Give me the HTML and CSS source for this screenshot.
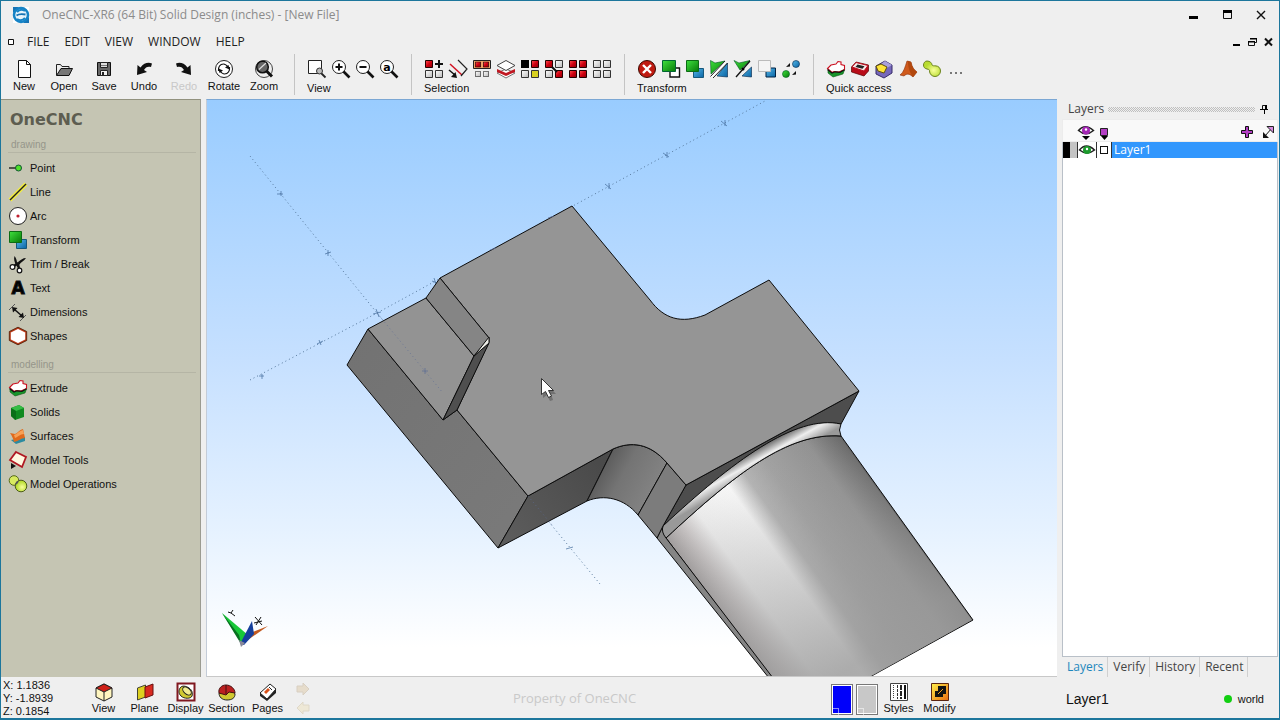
FILE: index.html
```html
<!DOCTYPE html>
<html lang="en">
<head>
<meta charset="utf-8">
<title>OneCNC-XR6</title>
<link rel="stylesheet" href="styles.css">
</head>
<body>
<svg class="defs" aria-hidden="true">
  <defs>
    <linearGradient id="gGreen" x1="0" y1="0" x2="1" y2="1"><stop offset="0" stop-color="#3fe03f"/><stop offset="1" stop-color="#067a06"/></linearGradient>
    <linearGradient id="gBlue" x1="0" y1="0" x2="1" y2="1"><stop offset="0" stop-color="#56b8e8"/><stop offset="1" stop-color="#0a64a4"/></linearGradient>
    <linearGradient id="gRed" x1="0" y1="0" x2="1" y2="1"><stop offset="0" stop-color="#ff5050"/><stop offset=".5" stop-color="#d00010"/><stop offset="1" stop-color="#8a0008"/></linearGradient>
    <linearGradient id="gWhite" x1="0" y1="0" x2="1" y2="1"><stop offset="0" stop-color="#fff"/><stop offset="1" stop-color="#bbb"/></linearGradient>
    <linearGradient id="gGold" x1="0" y1="0" x2="1" y2="1"><stop offset="0" stop-color="#fff04a"/><stop offset="1" stop-color="#e86a10"/></linearGradient>
    <radialGradient id="gLime" cx=".6" cy=".6"><stop offset="0" stop-color="#f8ff9a"/><stop offset="1" stop-color="#b8dc30"/></radialGradient>
    <symbol id="sqR" viewBox="0 0 8 8"><path d="M.5.5h7v7h-7z" fill="url(#gRed)" stroke="#200"/></symbol>
    <symbol id="sqW" viewBox="0 0 8 8"><path d="M.5.5h7v7h-7z" fill="url(#gWhite)" stroke="#333"/></symbol>
    <symbol id="extrude" viewBox="0 0 20 20">
      <path d="M2 11v3l5 4 10-3 1.500-4z" fill="#17952a" stroke="#0a5a14" stroke-width=".6"/>
      <path d="M1.500 9.500 5 6l5-1L12 2.500l3 .5v2.500l3.500 1v4L13 13l-5-.5-2 1z" fill="#fff" stroke="#cc1020" stroke-width="1.100"/>
      <path d="M1.500 10.500 6 14l3-1.200 5 .5 4.500-2.500" fill="none" stroke="#111" stroke-width="1.200"/>
    </symbol>
    <symbol id="transform" viewBox="0 0 20 20"><path d="M8.500 9.500h10v9h-10z" fill="url(#gBlue)" stroke="#17587c"/><path d="M1.500 1.500h12v11h-12z" fill="url(#gGreen)" stroke="#0c6b14"/></symbol>
    <symbol id="ops" viewBox="0 0 20 20"><circle cx="6" cy="6.500" r="4.800" fill="#d8ea60" stroke="#55691b"/><circle cx="13" cy="12" r="5.800" fill="url(#gLime)" stroke="#4d5e17"/><path d="M7.200 11.200Q7.500 7 10.800 6.600 10.500 10 7.200 11.200z" fill="#555"/></symbol>
    <linearGradient id="cyl" gradientUnits="userSpaceOnUse" x1="666" y1="538" x2="830" y2="420">
      <stop offset="0" stop-color="#a09c9c"/><stop offset=".1" stop-color="#c6c2c2"/><stop offset=".2" stop-color="#ececec"/><stop offset=".4" stop-color="#f6f6f6"/><stop offset=".5" stop-color="#b4b4b4"/><stop offset=".62" stop-color="#a2a2a2"/><stop offset=".84" stop-color="#929292"/><stop offset="1" stop-color="#646464"/>
    </linearGradient>
    <linearGradient id="cylFade" gradientUnits="userSpaceOnUse" x1="740" y1="480" x2="866" y2="656"><stop offset="0" stop-color="#9a9a9a" stop-opacity="0"/><stop offset="1" stop-color="#9a9a9a" stop-opacity=".8"/></linearGradient>
    <linearGradient id="fillet" gradientUnits="userSpaceOnUse" x1="735" y1="462" x2="745" y2="480"><stop offset="0" stop-color="#777"/><stop offset=".45" stop-color="#eee"/><stop offset="1" stop-color="#999"/></linearGradient>
    <linearGradient id="front" gradientUnits="userSpaceOnUse" x1="510" y1="540" x2="600" y2="465"><stop offset="0" stop-color="#5c5c5c"/><stop offset="1" stop-color="#4a4a4a"/></linearGradient>
    <linearGradient id="bend" gradientUnits="userSpaceOnUse" x1="598" y1="475" x2="652" y2="505"><stop offset="0" stop-color="#5c5c5c"/><stop offset=".35" stop-color="#747474"/><stop offset="1" stop-color="#858585"/></linearGradient>
    <linearGradient id="side" x1="0" y1="0" x2="1" y2="1"><stop offset="0" stop-color="#727272"/><stop offset="1" stop-color="#7a7a7a"/></linearGradient>
  </defs>
</svg>

<div class="app">
  <header class="titlebar">
    <svg class="logo" viewBox="0 0 18 18"><path d="M1 1h16v16H1z" fill="#fff"/><path d="M1 1h6L1 7zM17 17h-6l6-6z" fill="#1773b4"/><circle cx="9" cy="9" r="7" fill="#e8f4fb" stroke="#1583c6" stroke-width="2.500"/><path d="M13 5a6 6 0 0 0-8 1M5 13a6 6 0 0 0 8-1" stroke="#1583c6" stroke-width="2" fill="none"/><path d="M4.500 9.500c2-1.500 6-1.500 9-1" stroke="#1773b4" stroke-width="1.800" fill="none"/></svg>
    <span class="title">OneCNC-XR6 (64 Bit) Solid Design (inches) - [New File]</span>
    <div class="winbtns">
      <button aria-label="Minimize"><svg viewBox="0 0 12 12"><path d="M2 7h9v3H2z"/></svg></button>
      <button aria-label="Maximize"><svg viewBox="0 0 12 12"><path d="M2.500 1.500h8v8h-8z" fill="none" stroke="#111"/><path d="M2 1h9v3H2z"/></svg></button>
      <button aria-label="Close"><svg viewBox="0 0 12 12"><path d="M2 2l8 8M10 2l-8 8" stroke="#111" stroke-width="1.400"/></svg></button>
    </div>
  </header>

  <nav class="menubar">
    <button class="sys" aria-label="Document menu"><svg viewBox="0 0 8 8"><path d="M1.500 1.500h5v5h-5z" fill="#fff" stroke="#111"/></svg></button>
    <button>FILE</button><button>EDIT</button><button>VIEW</button><button>WINDOW</button><button>HELP</button>
    <div class="docbtns">
      <button aria-label="Minimize document"><svg viewBox="0 0 10 10"><path d="M2 7h7v2H2z"/></svg></button>
      <button aria-label="Restore document"><svg viewBox="0 0 10 10"><path d="M3.500 1.500h6v4h-2M1.500 4.500h6v4h-6z" fill="none" stroke="#111"/><path d="M3 1h7v1.500H3zM1 4h7v1.500H1z"/></svg></button>
      <button aria-label="Close document"><svg viewBox="0 0 10 10"><path d="M2 1.500l7 7M9 1.500l-7 7" stroke="#111" stroke-width="2"/></svg></button>
    </div>
  </nav>

  <div class="toolbar">
    <div class="filebtns">
      <button><svg viewBox="0 0 20 20"><path d="M4.500 1.500h8l4 4v13h-12z" fill="#fff" stroke="#111"/><path d="M12.500 1.500v4h4" fill="none" stroke="#111"/></svg>New</button>
      <button><svg viewBox="0 0 20 20"><path d="M2.500 16V5.500h4l1.500 2h7V10" fill="#eee" stroke="#222"/><path d="M2.500 16.500 7 9.500h11.500l-3.500 7z" fill="#777" stroke="#111"/></svg>Open</button>
      <button><svg viewBox="0 0 20 20"><path d="M3.500 3.500h13v13h-13z" fill="#666" stroke="#111"/><path d="M6.500 3.500h7v5h-7z" fill="#ddd" stroke="#222"/><path d="M6.500 11.500h7v5h-7z" fill="#eee" stroke="#222"/><path d="M8 13h2v3H8z" fill="#222"/><path d="M7 6.500h6" stroke="#777"/></svg>Save</button>
      <button><svg viewBox="0 0 20 20"><path d="M3 16 3.500 6l3 2.500C10 4 14 3 18 4.500L17 8c-3-1-5.500 0-7 3l3 2z" fill="#111"/></svg>Undo</button>
      <button disabled><svg viewBox="0 0 20 20"><path d="M17 16 16.500 6l-3 2.500C10 4 6 3 2 4.500L3 8c3-1 5.500 0 7 3l-3 2z" fill="#111"/></svg>Redo</button>
      <button><svg viewBox="0 0 20 20"><circle cx="10" cy="10" r="8.500" fill="#fff" stroke="#222"/><path d="M4.500 12C4 8 6 5 9.500 5c1.500 0 3 1 5 3.500M15.500 8c.5 4-1.500 7-5 7-1.500 0-3-1-5-3.500" fill="none" stroke="#111" stroke-width="1.200"/><path d="M15.500 10.500l-4.500-2 3.500-2.500zM4.500 9.500l4.500 2L5.500 14z" fill="#111"/></svg>Rotate</button>
      <button><svg viewBox="0 0 20 20"><circle cx="10" cy="10" r="8.500" fill="none" stroke="#444"/><circle cx="8.500" cy="8" r="5.800" fill="#666" stroke="#111" stroke-width="1.500"/><path d="M5 10.500 12 4" stroke="#ddd" stroke-width="1.200"/><path d="m12.500 12 5.500 5.500" stroke="#111" stroke-width="3"/></svg>Zoom</button>
    </div>
    <section class="group">
      <div class="icons">
        <button aria-label="Zoom window"><svg viewBox="0 0 20 20"><path d="M1.500 1.500h13v13h-13z" fill="#fff" stroke="#222"/><circle cx="12.500" cy="12" r="3" fill="#bbb" stroke="#333"/><path d="m14.500 14.500 4 4" stroke="#222" stroke-width="1.800"/></svg></button>
        <button aria-label="Zoom in"><svg viewBox="0 0 20 20"><circle cx="8" cy="8" r="6.500" fill="#fff" stroke="#222"/><path d="M4.500 8h7M8 4.500v7" stroke="#111" stroke-width="2"/><path d="m12.500 12.500 6 6" stroke="#111" stroke-width="2.600"/></svg></button>
        <button aria-label="Zoom out"><svg viewBox="0 0 20 20"><circle cx="8" cy="8" r="6.500" fill="#fff" stroke="#222"/><path d="M4.500 8h7" stroke="#111" stroke-width="2"/><path d="m12.500 12.500 6 6" stroke="#111" stroke-width="2.600"/></svg></button>
        <button aria-label="Zoom all"><svg viewBox="0 0 20 20"><circle cx="8" cy="8" r="6.500" fill="#fff" stroke="#222"/><text x="8" y="12" class="glyph-a">a</text><path d="m12.500 12.500 6 6" stroke="#111" stroke-width="2.600"/></svg></button>
      </div><span>View</span>
    </section>
    <section class="group">
      <div class="icons">
        <button aria-label="Select add"><svg viewBox="0 0 20 20"><use href="#sqR" x="1" y="1" width="8" height="8"/><path d="M15 1v8M11 5h8" stroke="#111" stroke-width="2"/><use href="#sqW" x="1" y="11" width="8" height="8"/><use href="#sqW" x="11" y="11" width="8" height="8"/></svg></button>
        <button aria-label="Select chain"><svg viewBox="0 0 20 20"><path d="m2 5 12 11" stroke="#d01020" stroke-width="1.500"/><path d="m10 1 9 9-6 7" fill="none" stroke="#222" stroke-width="1.200"/><path d="m1 11 6 5" stroke="#111" stroke-width="1.500"/><path d="m9 19-6-1 4.500-5z" fill="#111"/></svg></button>
        <button aria-label="Select group"><svg viewBox="0 0 20 20"><path d="M1.500 1.500h17v8h-17z" fill="#f0a468" stroke="#222"/><use href="#sqR" x="3" y="2.500" width="6" height="6"/><use href="#sqR" x="11" y="2.500" width="6" height="6"/><use href="#sqW" x="3" y="12" width="6" height="6"/><use href="#sqW" x="11" y="12" width="6" height="6"/></svg></button>
        <button aria-label="Select layer"><svg viewBox="0 0 20 20"><path d="m1 14 9 5 9-5-9-4z" fill="#fff" stroke="#777"/><path d="m1 10 9 4 9-4v3l-9 4-9-4z" fill="#c01822"/><path d="m1 6.500 9-5 9 5-9 5z" fill="#fff" stroke="#444"/></svg></button>
        <button aria-label="Select colour"><svg viewBox="0 0 20 20"><path d="M1 1h8v8H1z"/><use href="#sqR" x="11" y="1" width="8" height="8"/><use href="#sqW" x="1" y="11" width="8" height="8"/><path d="M11.500 11.500h7v7h-7z" fill="#d8d020" stroke="#333"/></svg></button>
        <button aria-label="Invert selection"><svg viewBox="0 0 20 20"><use href="#sqR" x="1" y="1" width="8" height="8"/><use href="#sqW" x="11" y="1" width="8" height="8"/><use href="#sqW" x="1" y="11" width="8" height="8"/><use href="#sqR" x="11" y="11" width="8" height="8"/><path d="m8 8 5 5" stroke="#111" stroke-width="2"/></svg></button>
        <button aria-label="Select all"><svg viewBox="0 0 20 20"><use href="#sqR" x="1" y="1" width="8" height="8"/><use href="#sqR" x="11" y="1" width="8" height="8"/><use href="#sqR" x="1" y="11" width="8" height="8"/><use href="#sqR" x="11" y="11" width="8" height="8"/></svg></button>
        <button aria-label="Select none"><svg viewBox="0 0 20 20"><use href="#sqW" x="1" y="1" width="8" height="8"/><use href="#sqW" x="11" y="1" width="8" height="8"/><use href="#sqW" x="1" y="11" width="8" height="8"/><use href="#sqW" x="11" y="11" width="8" height="8"/></svg></button>
      </div><span>Selection</span>
    </section>
    <section class="group">
      <div class="icons">
        <button aria-label="Delete"><svg viewBox="0 0 20 20"><circle cx="10" cy="10" r="8.500" fill="#c01a10" stroke="#3a0800"/><path d="m6 6 8 8M14 6l-8 8" stroke="#fff" stroke-width="2.400"/></svg></button>
        <button aria-label="Copy"><svg viewBox="0 0 20 20"><path d="M9 9h9.500v9H9z" fill="#fff" stroke="#111" stroke-width="1.400"/><path d="M1.500 1.500h13v11h-13z" fill="url(#gGreen)" stroke="#063"/></svg></button>
        <button aria-label="Move"><svg viewBox="0 0 20 20"><use href="#transform"/></svg></button>
        <button aria-label="Offset"><svg viewBox="0 0 20 20"><path d="M1.500 1.500 6 4l10-2L2 15z" fill="url(#gGreen)" stroke="#052" stroke-width=".6"/><path d="M18.500 4v14L8 17z" fill="url(#gBlue)" stroke="#024" stroke-width=".6"/><path d="M2.500 18 16 3.500" stroke="#fff" stroke-width="2.500"/><path d="M1.500 17.500 16 2M4 19 18.500 4" stroke="#222"/></svg></button>
        <button aria-label="Mirror"><svg viewBox="0 0 20 20"><path d="M1 1.500 6 4l11-2.500L7 11z" fill="url(#gGreen)" stroke="#052" stroke-width=".6"/><path d="M18.500 8v10L9 17z" fill="url(#gBlue)" stroke="#024" stroke-width=".6"/><path d="M3 18 17 2" stroke="#111" stroke-width="1.300"/><circle cx="10" cy="10" r="1.500"/></svg></button>
        <button aria-label="Scale"><svg viewBox="0 0 20 20"><path d="M9 9h9.500v9H9z" fill="url(#gBlue)" stroke="#024"/><path d="M1.500 1.500h12v11h-12z" fill="#f4f4f4" stroke="#bbb"/></svg></button>
        <button aria-label="Rotate copy"><svg viewBox="0 0 20 20"><circle cx="15" cy="5" r="3.500" fill="url(#gBlue)" stroke="#024" stroke-width=".6"/><circle cx="5" cy="15" r="3.500" fill="url(#gGreen)" stroke="#052" stroke-width=".6"/><path d="m5 8 4-4v3.500zM11 16l4-4v3.500z" fill="#111"/></svg></button>
      </div><span>Transform</span>
    </section>
    <section class="group">
      <div class="icons">
        <button aria-label="Extrude"><svg viewBox="0 0 20 20"><use href="#extrude"/></svg></button>
        <button aria-label="Pocket"><svg viewBox="0 0 20 20"><path d="M1.500 8 6 3l12.500 3v6L14 17 1.500 13z" fill="#b80c18" stroke="#500" stroke-width=".7"/><path d="M2 8 6 3.500l12 3-4 5.500z" fill="#f8e8e8" stroke="#c01020"/><path d="m5.500 8 2-2.500 7 1.700-2 2.600z" fill="#222"/></svg></button>
        <button aria-label="Chamfer"><svg viewBox="0 0 20 20"><path d="m2 7 9-5 7 4v8l-8 5-8-4z" fill="#7668ba" stroke="#372b68"/><path d="m7 5 4-3 7 4-5 3z" fill="#a9a0dc"/><path d="m2 7 5-2 6 3-3 6-6-2z" fill="#ffe53a" stroke="#61520a"/></svg></button>
        <button aria-label="Loft"><svg viewBox="0 0 20 20"><path d="M2 16c4-3 5-8 7-14l4 1c1 5 3 8 6 10l-4 5c-3-3-6-4-9-1z" fill="#cf5a1c" stroke="#8a2f0a" stroke-width=".6"/><path d="M10 2l3 1c1 5 3 8 6 10l-4 5c-3-4-5-9-5-16z" fill="#b2480f"/></svg></button>
        <button aria-label="Combine"><svg viewBox="0 0 20 20"><path d="M5 2C8 2 10 4 10 6c1 1 2 .8 3 .8 3.500 0 5.500 2.200 5.500 5.200S16 17.500 13 17.500 7.500 15 7.500 12c0-1 0-1.500-2.500-2C2.500 9.500 1.500 8 1.500 6S3 2 5 2z" fill="url(#gLime)" stroke="#6d8420"/></svg></button>
        <button aria-label="More"><svg viewBox="0 0 20 20"><path d="M4 13h2v2H4zM9 13h2v2H9zM14 13h2v2h-2z" fill="#777"/></svg></button>
      </div><span>Quick access</span>
    </section>
  </div>

  <main class="body">
    <aside class="sidebar">
      <h1>OneCNC</h1>
      <h2>drawing</h2>
      <ul>
        <li><button><svg viewBox="0 0 20 20"><path d="M1 10h7" stroke="#111" stroke-width="1.300"/><circle cx="10.500" cy="10" r="3" fill="#4fe22a" stroke="#153"/></svg>Point</button></li>
        <li><button><svg viewBox="0 0 20 20"><path d="M2 18 18 2" stroke="#f4ef3a" stroke-width="4"/><path d="M2 18 18 2" stroke="#222" stroke-width="1.500"/></svg>Line</button></li>
        <li><button><svg viewBox="0 0 20 20"><circle cx="10" cy="10" r="8.500" fill="#fff" stroke="#222"/><circle cx="10" cy="10" r="1.600" fill="#c02030"/></svg>Arc</button></li>
        <li><button><svg viewBox="0 0 20 20"><use href="#transform"/></svg>Transform</button></li>
        <li><button><svg viewBox="0 0 20 20"><path d="M6.500 2C5.500 5 6.500 8 8 11l2 3 1-3c2-3 5-4 7-7-3 0-6 2-9 5C9 6 8 4 6.500 2z" fill="#111"/><path d="m6 12 4-3M11 14l-1-4" stroke="#111" stroke-width="2.200"/><circle cx="4.500" cy="13" r="2.400" fill="#fff" stroke="#111" stroke-width="1.200"/><circle cx="11.500" cy="16.500" r="2.300" fill="#fff" stroke="#111" stroke-width="1.200"/></svg>Trim / Break</button></li>
        <li><button><svg viewBox="0 0 20 20"><text x="10" y="16" class="glyph-text">A</text></svg>Text</button></li>
        <li><button><svg viewBox="0 0 20 20"><path d="m1 8 6-6M12 19l6-6" stroke="#555"/><path d="m6 7 8 7" stroke="#111" stroke-width="1.500"/><path d="m4 5 5.500 1L5 10.500zM16 16l-5.500-1 4.500-4.500z" fill="#111"/></svg>Dimensions</button></li>
        <li><button><svg viewBox="0 0 20 20"><path d="m10 2 8 4v8l-8 4-8-4V6z" fill="#fff" stroke="#b83a18" stroke-width="1.600"/><path d="m10 1.200 8.700 4.300v9L10 18.800l-8.700-4.300v-9z" fill="none" stroke="#4b1e08" stroke-width=".8"/></svg>Shapes</button></li>
      </ul>
      <h2>modelling</h2>
      <ul>
        <li><button><svg viewBox="0 0 20 20"><use href="#extrude"/></svg>Extrude</button></li>
        <li><button><svg viewBox="0 0 20 20"><path d="m3 6 8-3 5 3v9l-9 3-4-4z" fill="#0f8a20"/><path d="m3 6 8-3 5 3-8 3z" fill="#35bd45"/><path d="M8 9v9l-5-4V6z" fill="#0a6f18"/></svg>Solids</button></li>
        <li><button><svg viewBox="0 0 20 20"><path d="m3 14 5 4 9-3v-4z" fill="#2d8ba0"/><path d="m2 7 5 1c3-1 4-4 8-5l2 9c-4 0-6 3-11 4-1-4-2-6-4-9z" fill="#e06a1c"/><path d="M6 9c3-1 5-4 9-5l1 4c-4 0-6 3-9 4z" fill="#f7a156"/></svg>Surfaces</button></li>
        <li><button><svg viewBox="0 0 20 20"><path d="m8 2 10 5-4 10L2 10z" fill="#fff8e0" stroke="#b01822" stroke-width="1.800"/><path d="m3 13 5 3-5 3z" fill="#111"/></svg>Model Tools</button></li>
        <li><button><svg viewBox="0 0 20 20"><use href="#ops"/></svg>Model Operations</button></li>
      </ul>
    </aside>

    <section class="viewport" aria-label="Model view">
      <svg viewBox="207 100 850 577" preserveAspectRatio="xMinYMin slice">
        <g class="axis">
          <path d="M250 380 377 313 765 101M250 156 377 313 600 584"/>
        </g>
        <path class="tick" d="M259 376h5M262 374v5M317 344l6-3M319 340l2 5M432 281l5 2M434 278l2 6M605 184l6 5M609 183v6M663 153l6 4M667 152v6M721 121l6 5M725 120v6M277 194h6M281 191v5M325 254l6-2M328 250v6M373 314l8-2M376 309l3 8M566 549l7-2"/>
        <g class="edges">
          <path fill="#4d4d4d" d="M686 485 859 391 841 424C800 417 740 456 663 526z"/>
          <path fill="url(#cyl)" d="M666 538C735 474 788 432 841 436L973 620 868 678H772z"/>
          <path class="plain" fill="url(#cylFade)" d="M667 538C735 475 788 433 840 437L972 620 868 678H773z"/>
          <path fill="#858585" d="M657 538 663 526 666 538 773 678H769z"/>
          <path fill="url(#fillet)" d="M663 526C732 462 795 414 841 424Q838 430 841 436C788 432 735 474 666 538Q661 532 663 526z"/>
          <path fill="url(#side)" d="M368 329 347 365 498 548 528 496 457 410 443 420z"/>
          <path fill="url(#front)" d="M528 496 613 449 587 501 498 548z"/>
          <path fill="url(#bend)" d="M613 449C631 441 650 443 667 463L638 515C624 498 604 494 587 501z"/>
          <path fill="#7c7c7c" d="M667 463 686 485 663 526 657 538 638 515z"/>
          <path fill="#959595" d="M572 206 650 300C664 319 681 324 705 315L769 280 859 391 686 485 667 463C650 443 631 441 613 449L528 496 457 410 489 342V338L440 278z"/>
          <path fill="#939393" d="M368 329 426 298 474 356 443 420z"/>
          <path fill="#858585" d="M426 298 440 278 489 338 474 356z"/>
          <path fill="#4f4f4f" d="M474 356 489 343 457 410 443 420z"/>
          <path fill="#ecece6" d="M489 337v6l-15 13z"/>
        </g>
        <path class="axis inner" d="M377 313 443 393M528 496 552 525"/>
        <path class="tick inner" d="M422 371h6M425 368v6M490 250l6-2M548 218l6-2"/>
        <g>
          <path d="m222 613 20 31 6-9z" fill="#18c838"/><path d="m222 613 19 31-2-9z" fill="#087020"/>
          <path d="m242 644 26-18-18 7z" fill="#c25a20"/>
          <path d="m240 644 12-23 2 13-10 11z" fill="#153f9c"/>
          <path d="M239 640l6 3-4 4z" fill="#889"/>
          <path d="m228 612 3 1 2-3M231 613l4 3M255 617l7 8M254 623l8-2M261 617l-5 8" stroke="#111" fill="none"/>
        </g>
        <path d="M543 380v18l4-3 3 6 3-1-2-6h5z" fill="#444" opacity=".45"/>
        <path d="M541.500 378.500v16l4-3 3 6 3-1.500-3-5.500h5z" fill="#fff" stroke="#333"/>
      </svg>
    </section>

    <aside class="panel">
      <div class="panel-head"><span>Layers</span><i class="grip"></i>
        <button aria-label="Pin"><svg viewBox="0 0 10 10"><path d="M3.500 1.500h4v4h-4z" fill="none" stroke="#111"/><path d="M6 1h2v5H6zM1 5h8v1H1zM5 6h1v4H5z"/></svg></button>
      </div>
      <div class="panel-tools">
        <button class="eye" aria-label="Show all"><svg viewBox="0 0 18 18"><path d="M1.500 7.500Q8 0 16.500 7.500 9 14 1.500 7.500z" fill="#fff" stroke="#222" stroke-width="1.500"/><circle cx="9" cy="7.500" r="4" fill="#a326b4"/><circle cx="9" cy="6.500" r="1.200" fill="#fff"/><path d="M5 13h8l-4 4z"/></svg></button>
        <button class="mark" aria-label="Mark all"><svg viewBox="0 0 18 18"><path d="M5.500 5.500h7v7h-7z" fill="#b33fc4" stroke="#222"/><path d="M6 13h7l-3.500 4z"/></svg></button>
        <button class="add" aria-label="Add layer"><svg viewBox="0 0 18 18"><path d="M7.500 3.500v4h-4v3h4v4h3v-4h4v-3h-4v-4z" fill="#b33fc4" stroke="#111"/></svg></button>
        <button aria-label="Expand"><svg viewBox="0 0 18 18"><path d="m6 13 7-8" stroke="#111"/><path d="M8 3.500h6.500V10z" fill="#d58ade" stroke="#222"/><path d="M4 9v6h6z" fill="#111"/></svg></button>
      </div>
      <div class="layers">
        <div class="layer">
          <i class="sw black"></i><i class="sw grey"></i>
          <button class="eye" aria-label="Visible"><svg viewBox="0 0 18 16"><path d="M1.500 8Q8 0 16.500 8 9 14 1.500 8z" fill="#fff" stroke="#222" stroke-width="1.500"/><circle cx="9" cy="8" r="4" fill="#1c9a2c"/><circle cx="9" cy="7" r="1.200" fill="#fff"/></svg></button>
          <label class="pick"><input type="checkbox" aria-label="Mark Layer1"></label>
          <button class="name">Layer1</button>
        </div>
      </div>
      <div class="tabs" role="tablist"><button role="tab" class="on" aria-selected="true">Layers</button><button role="tab">Verify</button><button role="tab">History</button><button role="tab">Recent</button></div>
    </aside>
  </main>

  <footer class="status">
    <div class="coords"><span>X: 1.1836</span><span>Y: -1.8939</span><span>Z: 0.1854</span></div>
    <div class="sbtns">
      <button><svg viewBox="0 0 20 20"><path d="m2 6 8-4 8 4v9l-8 4-8-4z" fill="#fff6c0" stroke="#222"/><path d="m2 6 8-4 8 4-8 4z" fill="#cf2018" stroke="#222"/><path d="M10 10v9" stroke="#222"/></svg>View</button>
      <button><svg viewBox="0 0 20 20"><path d="m2.500 6 8-3v12l-8 3z" fill="#ddd020" stroke="#443"/><path d="m10 5 8-3v11l-8 3z" fill="#d82a20" stroke="#611"/></svg>Plane</button>
      <button><svg viewBox="0 0 20 20"><path d="M1.500 1.500h17v17h-17z" fill="#fff" stroke="#801820" stroke-width="2"/><path d="M4 6c2-3 6-2 9 0s4 5 3 8-8 3-11 0-2-6-1-8z" fill="#d0c830" stroke="#222"/><ellipse cx="11" cy="9" rx="5" ry="3" transform="rotate(40 11 9)" fill="#f2ec90" stroke="#222"/></svg>Display</button>
      <button><svg viewBox="0 0 20 20"><path d="M2 11c0 4 3 7 8 7s8-2 8-6l-3-6z" fill="#d0c830" stroke="#222"/><path d="M2 11c-1-5 3-8 7-8 5 0 9 4 9 8l-6-1-3 3z" fill="#bb2020" stroke="#411"/><path d="M9 3v9" stroke="#411"/></svg>Section</button>
      <button><svg viewBox="0 0 20 20"><path d="M2 11 12 2l6 5-9 10z" fill="#fff" stroke="#222"/><path d="m2 11 7 6 9-10v4l-9 8-7-5z" fill="#222"/><path d="m6 10 4-4 2 2-4 4z" fill="#d85018"/><path d="m11 5 3 3" stroke="#222"/></svg>Pages</button>
    </div>
    <div class="arrows">
      <button disabled aria-label="Next page"><svg viewBox="0 0 16 16"><path d="M2 5h6V2l6 6-6 6v-3H2z" fill="#e6dccb" stroke="#d8cfc2"/></svg></button>
      <button disabled aria-label="Previous page"><svg viewBox="0 0 16 16"><path d="M14 5H8V2L2 8l6 6v-3h6z" fill="#eee8d6" stroke="#dfd8c8"/></svg></button>
    </div>
    <div class="owner">Property of OneCNC</div>
    <div class="swatches"><button class="blue" aria-label="Line colour"></button><button class="silver" aria-label="Fill colour"></button></div>
    <div class="sbtns">
      <button><svg viewBox="0 0 20 20"><path d="M1.500 1.500h17v17h-17z" fill="#fff" stroke="#444"/><path d="M4.500 3v14" stroke="#444" stroke-dasharray="1 1"/><path d="M8.500 3v14" stroke="#333" stroke-dasharray="3 1"/><path d="M12 3v14" stroke="#222" stroke-width="2" stroke-dasharray="5 1"/><path d="M16 3v14" stroke="#111" stroke-width="2"/></svg>Styles</button>
      <button><svg viewBox="0 0 20 20"><path d="M1.500 1.500h17v17h-17z" fill="url(#gGold)" stroke="#5a2510"/><path d="M8 4h8v8h-3v3H5V9h3z" fill="#111"/><path d="m8 12 5-5" stroke="#f3a020"/></svg>Modify</button>
    </div>
    <div class="current"><span>Layer1</span><span class="world"><i></i>world</span></div>
  </footer>
</div>
</body>
</html>
```
FILE: styles.css
```css
* { box-sizing: border-box; }
body { margin: 0; font: 11px/14px "Liberation Sans", Arial, sans-serif; color: #111; }
button { margin: 0; padding: 0; border: 0; background: none; font: inherit; color: inherit; }
svg { display: block; flex: none; }
ul { list-style: none; margin: 0; padding: 0; }
.defs { position: absolute; width: 0; height: 0; }

.app { display: flex; flex-direction: column; height: 100vh; background: #efefef; border: 1px solid #1c769c; border-bottom-width: 2px; }

.titlebar, .menubar { font-family: "Open Sans", "Noto Sans", sans-serif; display: flex; align-items: center; }
.titlebar { height: 28px; padding-left: 11px; font-size: 12px; color: #8b8b8b; }
.logo { width: 18px; height: 18px; margin-right: 12px; }
.winbtns { display: flex; gap: 22px; margin-left: auto; padding-right: 12px; }
.winbtns svg { width: 12px; height: 12px; }
.menubar { height: 25px; font-size: 12px; color: #222; padding-left: 6px; gap: 15px; }
.menubar .sys svg { width: 8px; height: 8px; }
.menubar .sys { margin-right: -3px; }
.docbtns { display: flex; gap: 6px; margin-left: auto; padding-right: 6px; }
.docbtns svg { width: 10px; height: 10px; }

.toolbar { display: flex; height: 45px; padding-left: 3px; }
.filebtns { display: flex; padding: 5px 10px 0 0; }
.filebtns button { width: 40px; display: flex; flex-direction: column; align-items: center; }
.toolbar svg, .sidebar svg, .sbtns svg { width: 20px; height: 20px; }
.filebtns button:disabled { color: #c8c8c8; }
.group { border-left: 1px solid #c4c4c4; padding: 5px 10px 0; height: 41px; }
.icons { display: flex; }
.icons button { width: 24px; height: 20px; display: flex; justify-content: center; }
.group span { display: block; padding: 2px 0 0 2px; }
.glyph-a { font: bold 11px "DejaVu Sans", sans-serif; text-anchor: middle; }
.glyph-text { font: bold 17px "DejaVu Sans", sans-serif; text-anchor: middle; stroke: #111; stroke-width: 1px; }

.body { flex: 1; min-height: 0; display: flex; }
.sidebar { width: 200px; background: #c5c5b3; border-top: 1px solid #92927f; border-right: 1px solid #9b9b91; padding: 10px 4px 0 7px; }
.sidebar h1 { margin: 0 0 0 2px; font: bold 16px/20px "DejaVu Sans", Verdana, sans-serif; color: #5d5d50; }
.sidebar h2 { margin: 9px 0 3px; padding: 0 0 0 3px; height: 14px; font-size: 10px; line-height: 12px; font-weight: normal; color: #95958a; border-bottom: 1px solid #b5b5a5; }
.sidebar h2 + ul + h2 { margin-top: 11px; }
.sidebar li button { display: flex; align-items: center; gap: 2px; height: 24px; }

.viewport { flex: 1; min-width: 0; margin-left: 5px; border: 1px solid #7ba7d4; border-width: 1px 0 1px 1px; border-color: #7ba7d4 #c4ccd8 #c8c8c8; background: linear-gradient(#99ccff, #c6e0ff 45%, #e6f2ff 75%, #fff 95%); overflow: hidden; }
.viewport svg { width: 100%; height: 100%; }
.axis { fill: none; stroke: #56789c; stroke-width: 1; stroke-dasharray: 1 3; }
.tick { fill: none; stroke: #4a72a0; stroke-width: 1; opacity: .75; }
.inner { stroke: #5c6c94; opacity: .7; }
.edges path { stroke: #0c0c0c; stroke-width: 1; stroke-linejoin: round; }
.edges .plain { stroke: none; }

.panel { width: 222px; padding: 0 1px 0 5px; display: flex; flex-direction: column; font-family: "Open Sans", "Noto Sans", sans-serif; font-size: 12px; color: #444; }
.panel-head { display: flex; align-items: center; height: 20px; padding: 0 9px 0 6px; gap: 4px; }
.grip { flex: 1; height: 5px; background: conic-gradient(#aaa 25%, transparent 0 50%, #aaa 0 75%, transparent 0) 0 0 / 2px 2px; opacity: .7; }
.panel-head svg { width: 10px; height: 10px; }
.panel-tools { display: flex; height: 23px; padding: 2px 0 0 14px; background: #f9f9f9; border: 1px solid #ececec; }
.panel-tools svg { width: 18px; height: 18px; }
.panel-tools .add { margin-left: auto; margin-right: 3px; }
.layers { flex: 1; background: #fff; border: 1px solid #b9c0c8; border-top: 0; }
.layer { display: flex; height: 16px; background: #3297fd; color: #fff; }
.sw { width: 7px; }
.black { background: #000; }
.grey { background: #c4c4c4; }
.layer .eye { width: 19px; background: #fff; border-left: 1px solid #333; }
.layer .eye svg { width: 18px; height: 16px; }
.pick { width: 16px; display: flex; align-items: center; justify-content: center; background: #fff; border: 1px solid #333; border-width: 0 1px; }
.pick input { appearance: none; width: 8px; height: 8px; margin: 0; border: 1px solid #111; }
.name { flex: 1; text-align: left; padding-left: 2px; line-height: 16px; }
.tabs { display: flex; height: 20px; }
.tabs button { padding: 0 4px 0 5px; border-right: 1px solid #d0d0d0; }
.tabs .on { color: #1d87bd; }

.status { height: 41px; display: flex; }
.coords { width: 82px; padding: 2px 0 0 2px; display: flex; flex-direction: column; line-height: 13px; }
.sbtns { display: flex; padding-top: 5px; }
.sbtns button { width: 41px; display: flex; flex-direction: column; align-items: center; line-height: 13px; }
.arrows { width: 30px; padding: 4px 7px 0; }
.arrows svg { width: 16px; height: 16px; }
.owner { flex: 1; text-align: center; align-self: center; font: 13px/18px "Open Sans", "Noto Sans", sans-serif; color: #c9c9c9; }
.swatches { display: flex; gap: 3px; padding-top: 7px; }
.swatches button { width: 22px; height: 31px; border: 1px solid #777; box-shadow: inset 0 0 0 1px #fff; }
.swatches button::before { content: ""; display: block; width: 5px; height: 6px; margin: 23px 0 0 1px; border: 1px solid #ffffff88; border-width: 1px 1px 0 0; }
.blue { background: #0000fa; }
.silver { background: #c8c8c8; }
.current { width: 217px; margin-left: 102px; display: flex; align-items: center; justify-content: space-between; font-size: 14px; padding: 3px 15px 0 4px; }
.world { display: flex; align-items: center; gap: 6px; font-size: 11px; }
.world i { width: 8px; height: 8px; border-radius: 50%; background: #12cf12; }
```
